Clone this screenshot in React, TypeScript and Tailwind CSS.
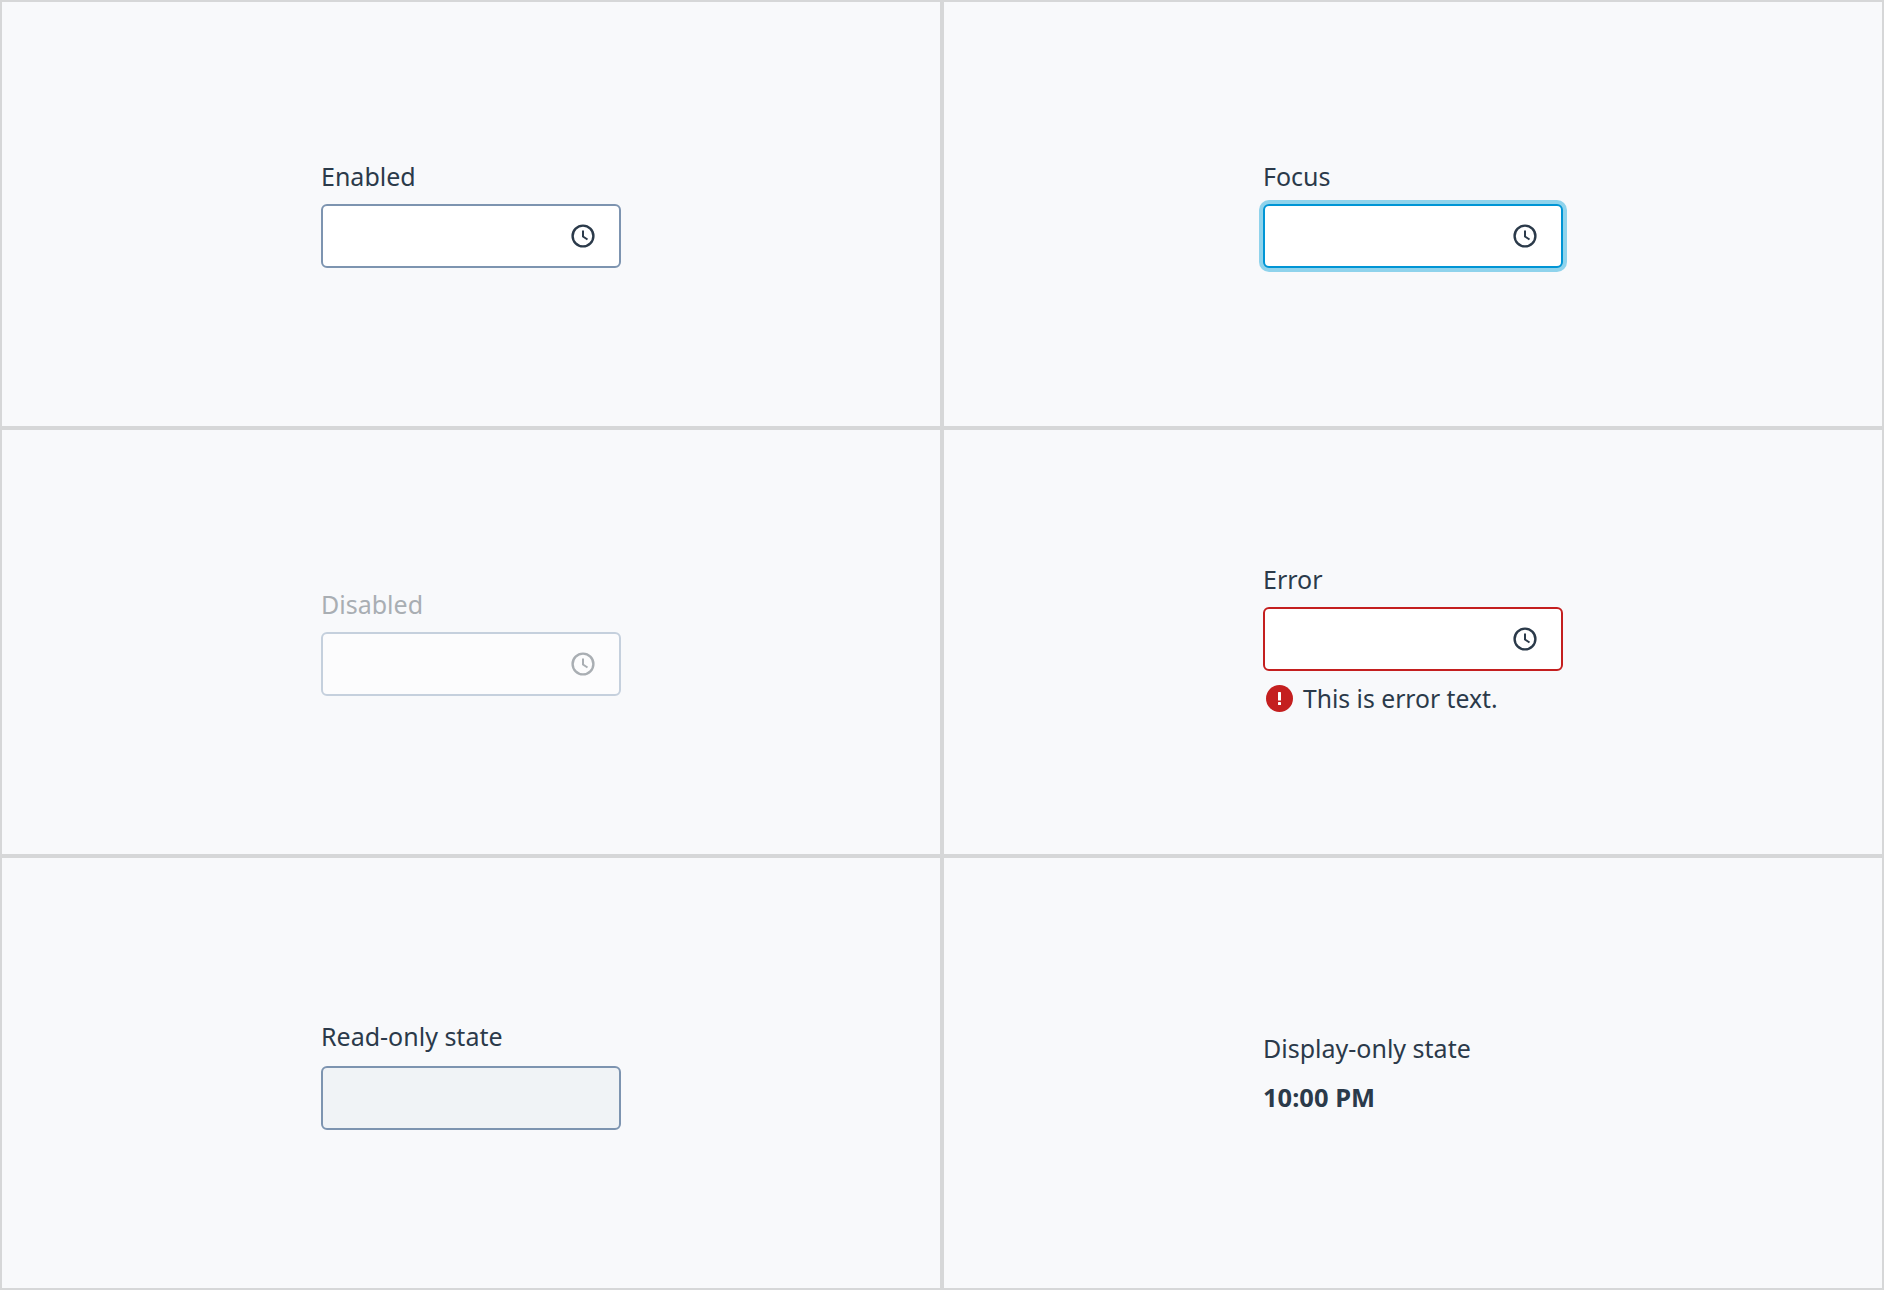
function ClockIcon() {
  return (
    <svg viewBox="0 0 24 24" fill="none" stroke="currentColor" className="h-6 w-6">
      <circle cx="12" cy="12" r="10.4" strokeWidth="2.4" />
      <path d="M12 6.5V12.5L16.5 15.5" strokeWidth="2" />
    </svg>
  );
}

function ErrorIcon() {
  return (
    <svg viewBox="0 0 27 27" className="h-[27px] w-[27px] shrink-0">
      <circle cx="13.5" cy="13.5" r="13.5" fill="#c41f1f" />
      <rect x="12" y="7" width="3" height="8.5" rx="0.6" fill="#fff" />
      <rect x="12" y="17" width="3" height="3" rx="0.6" fill="#fff" />
    </svg>
  );
}

function Cell({ children }: { children: React.ReactNode }) {
  return (
    <div className="flex items-center justify-center border-2 border-[#d6d7d8] bg-[#f8f9fb]">
      <div className="w-[300px] font-['Noto_Sans',sans-serif] text-[25px] text-[#2b3a4a]">{children}</div>
    </div>
  );
}

function Label({ className, children }: { className?: string; children: React.ReactNode }) {
  return <div className={`leading-[31px] ${className ?? ''}`}>{children}</div>;
}

function Field({ className, children }: { className: string; children?: React.ReactNode }) {
  return (
    <div className={`flex h-[64px] items-center justify-end rounded-[6px] border-2 pr-[24px] ${className}`}>
      {children}
    </div>
  );
}

export default function App() {
  return (
    <div className="grid h-[1290px] w-[1884px] grid-cols-2 grid-rows-[428px_428px_434px]">
      <Cell>
        <Label>Enabled</Label>
        <Field className="mt-[12px] border-[#7d94b0] bg-white">
          <ClockIcon />
        </Field>
      </Cell>
      <Cell>
        <Label>Focus</Label>
        <Field className="mt-[12px] border-[#0095d5] bg-white shadow-[0_0_0_4px_#8fd3ec]">
          <ClockIcon />
        </Field>
      </Cell>
      <Cell>
        <Label className="text-[#a9aeb3]">Disabled</Label>
        <Field className="mt-[12px] border-[#c5d0dd] bg-[#fcfcfd] text-[#a9aeb3]">
          <ClockIcon />
        </Field>
      </Cell>
      <Cell>
        <Label>Error</Label>
        <Field className="mt-[12px] border-[#c41f1f] bg-white">
          <ClockIcon />
        </Field>
        <div className="mt-[6px] flex h-[43px] items-center gap-[10px] pl-[3px] text-[24.7px]">
          <ErrorIcon />
          <span>This is error text.</span>
        </div>
      </Cell>
      <Cell>
        <Label className="pt-[5px] leading-[31px]">Read-only state</Label>
        <Field className="mt-[14px] border-[#7d94b0] bg-[#f0f3f6]" />
      </Cell>
      <Cell>
        <div className="pb-[2px]">
          <div className="leading-[36px]">Display-only state</div>
          <div className="mt-[13px] text-[25.5px] leading-[36px] font-bold">10:00 PM</div>
        </div>
      </Cell>
    </div>
  );
}
